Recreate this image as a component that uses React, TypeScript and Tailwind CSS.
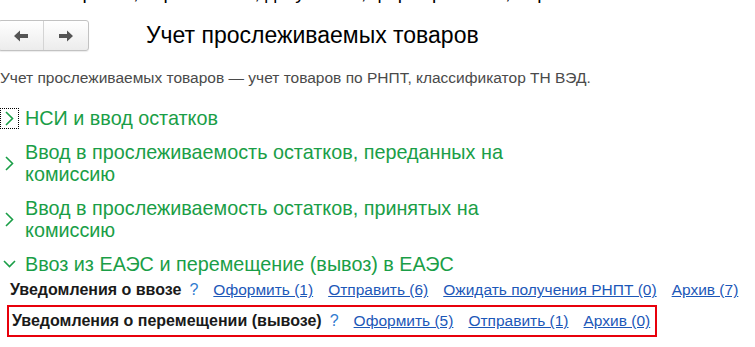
const groups = [
  { title: "НСИ и ввод остатков", focused: true },
  { title: "Ввод в прослеживаемость остатков, переданных на комиссию" },
  { title: "Ввод в прослеживаемость остатков, принятых на комиссию" },
];

function Arrow({ dir }: { dir: "left" | "right" }) {
  return (
    <svg width="16" height="12" viewBox="0 0 16 12" className={dir === "right" ? "rotate-180" : ""}>
      <path d="M1 6 L7 0.5 L7 4 L15 4 L15 8 L7 8 L7 11.5 Z" fill="#555555" />
    </svg>
  );
}

function Chevron({ open }: { open?: boolean }) {
  return open ? (
    <svg width="13" height="8" viewBox="0 0 13 8" className="shrink-0">
      <path d="M1 1 L6.5 6.5 L12 1" fill="none" stroke="#1a9e47" strokeWidth="1.6" />
    </svg>
  ) : (
    <svg width="9" height="15" viewBox="0 0 9 15" className="shrink-0">
      <path d="M1 1 L7.5 7.5 L1 14" fill="none" stroke="#1a9e47" strokeWidth="1.6" />
    </svg>
  );
}

function Row({ title, links }: { title: string; links: string[] }) {
  return (
    <div className="flex items-center h-[20px] whitespace-nowrap">
      <span className="font-bold text-[#1a1a1a] text-[16px] mr-[8px]">{title}</span>
      <span className="text-[#2f7bd0] text-[16px] mr-[15px]">?</span>
      {links.map((l) => (
        <a key={l} className="text-[#1c57b8] underline text-[15.5px] mr-[15px] cursor-pointer">
          {l}
        </a>
      ))}
    </div>
  );
}

export default function App() {
  return (
    <div className="w-[755px] h-[347px] bg-white overflow-hidden font-['Liberation_Sans',Arial,sans-serif] relative">
      {/* clipped line of the previous screen */}
      <div className="h-[3px] overflow-hidden">
        <div className="-mt-[17px] text-[19px] leading-[20px] whitespace-nowrap text-black pl-[40px]">
          Настройки, справочники, документы, формирование, обработки
        </div>
      </div>

      {/* Header */}
      <div className="flex items-center mt-[17px] h-[31px]">
        <div className="flex h-[31px] w-[91px] -ml-[2px] shrink-0 rounded-[3px] border border-[#c2c2c2] bg-gradient-to-b from-white to-[#ececec] shadow-[0_1px_1px_rgba(0,0,0,0.08)]">
          <div className="flex-1 flex items-center justify-center border-r border-[#d4d4d4]">
            <Arrow dir="left" />
          </div>
          <div className="flex-1 flex items-center justify-center">
            <Arrow dir="right" />
          </div>
        </div>
        <h1 className="ml-[57px] text-[23px] text-black leading-none whitespace-nowrap">Учет прослеживаемых товаров</h1>
      </div>

      <p className="mt-[18px] text-[15.5px] text-[#4a4a4a] leading-[18px] whitespace-nowrap">
        Учет прослеживаемых товаров — учет товаров по РНПТ, классификатор ТН ВЭД.
      </p>

      <div className="mt-[20px] flex flex-col gap-[12px]">
        {groups.map((g) => (
          <div key={g.title} className="flex items-center">
            <div
              className={
                g.focused
                  ? "w-[19px] h-[21px] flex items-center justify-center border border-dotted border-black shrink-0"
                  : "w-[19px] h-[21px] flex items-center justify-center shrink-0"
              }
            >
              <Chevron />
            </div>
            <div className="ml-[6px] w-[500px] text-[19.8px] leading-[22px] text-[#1a9e47]">{g.title}</div>
          </div>
        ))}
        <div className="flex items-center">
          <div className="w-[19px] h-[21px] flex items-center justify-center shrink-0">
            <Chevron open />
          </div>
          <div className="ml-[6px] text-[19.8px] leading-[22px] text-[#1a9e47] whitespace-nowrap">
            Ввоз из ЕАЭС и перемещение (вывоз) в ЕАЭС
          </div>
        </div>
      </div>

      <div className="ml-[10px] mt-[5px]">
        <Row
          title="Уведомления о ввозе"
          links={["Оформить (1)", "Отправить (6)", "Ожидать получения РНПТ (0)", "Архив (7)"]}
        />
      </div>
      <div className="ml-[7px] mt-[5px] w-[650px] h-[32px] border-2 border-[#e8000b] pl-[3px] flex items-center">
        <Row title="Уведомления о перемещении (вывозе)" links={["Оформить (5)", "Отправить (1)", "Архив (0)"]} />
      </div>
    </div>
  );
}
